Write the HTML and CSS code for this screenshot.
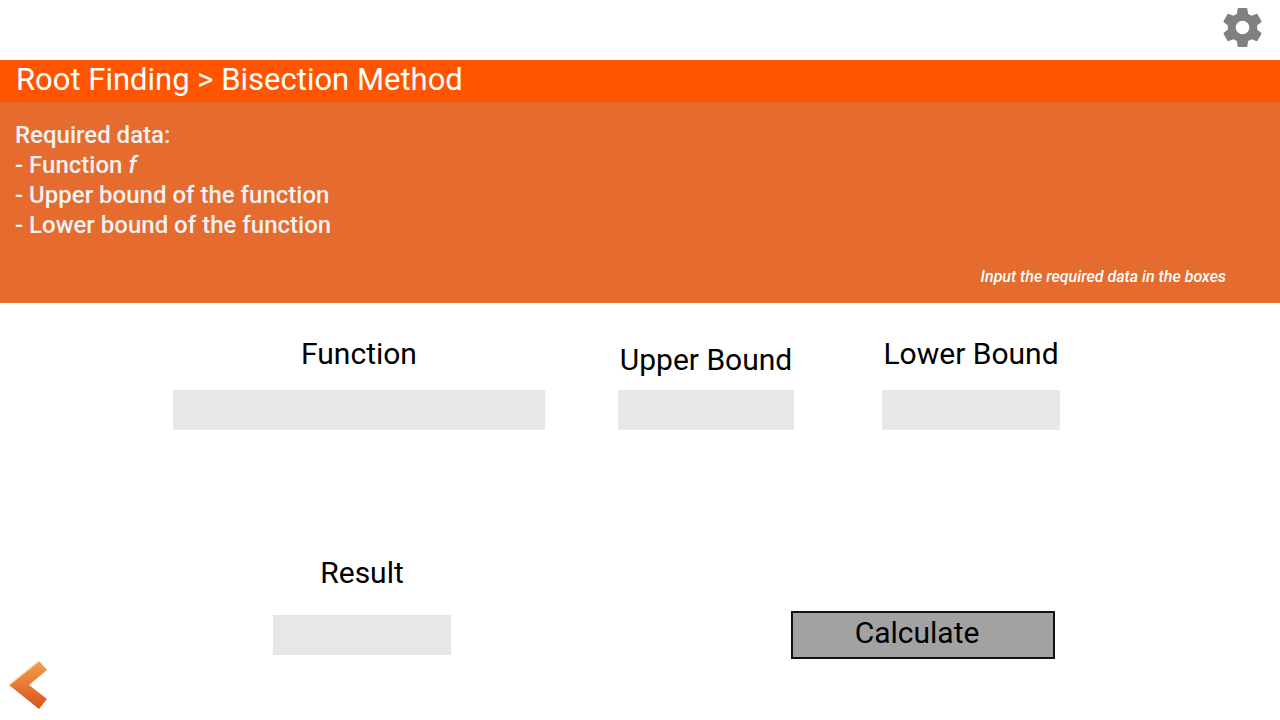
FILE: index.html
```html
<!DOCTYPE html>
<html lang="en">
<head>
<meta charset="utf-8">
<meta name="viewport" content="width=device-width, initial-scale=1">
<title>Root Finding &gt; Bisection Method</title>
<link rel="stylesheet" href="styles.css">
</head>
<body>
<header class="toolbar">
  <button class="icon-button" type="button" aria-label="Settings">
    <svg class="gear" viewBox="0 0 24 24" aria-hidden="true"><path d="M19.43 12.98c.04-.32.07-.64.07-.98s-.03-.66-.07-.98l2.11-1.65c.19-.15.24-.42.12-.64l-2-3.46c-.12-.22-.39-.3-.61-.22l-2.49 1c-.52-.4-1.08-.73-1.69-.98l-.38-2.65C14.46 2.18 14.25 2 14 2h-4c-.25 0-.46.18-.49.42l-.38 2.65c-.61.25-1.17.59-1.69.98l-2.49-1c-.23-.09-.49 0-.61.22l-2 3.46c-.13.22-.07.49.12.64l2.11 1.65c-.04.32-.07.65-.07.98s.03.66.07.98l-2.11 1.65c-.19.15-.24.42-.12.64l2 3.46c.12.22.39.3.61.22l2.49-1c.52.4 1.08.73 1.69.98l.38 2.65c.03.24.24.42.49.42h4c.25 0 .46-.18.49-.42l.38-2.65c.61-.25 1.17-.59 1.69-.98l2.49 1c.23.09.49 0 .61-.22l2-3.46c.12-.22.07-.49-.12-.64l-2.11-1.65zM12 15.5a3.5 3.5 0 1 1 0-7 3.5 3.5 0 0 1 0 7z"/></svg>
  </button>
</header>
<h1 class="title">Root Finding &gt; Bisection Method</h1>
<section class="info">
  <p class="info-heading">Required data:</p>
  <ul class="info-list">
    <li>- Function <em>f</em></li>
    <li>- Upper bound of the function</li>
    <li>- Lower bound of the function</li>
  </ul>
  <p class="note">Input the required data in the boxes</p>
</section>
<form class="form">
  <div class="inputs">
    <div class="field field-function">
      <label for="function">Function</label>
      <input id="function" type="text">
    </div>
    <div class="field field-upper">
      <label for="upper">Upper Bound</label>
      <input id="upper" type="text">
    </div>
    <div class="field field-lower">
      <label for="lower">Lower Bound</label>
      <input id="lower" type="text">
    </div>
  </div>
  <div class="outcome">
    <div class="field field-result">
      <label for="result">Result</label>
      <input id="result" type="text" readonly>
    </div>
    <button class="calculate" type="button">Calculate</button>
  </div>
</form>
<footer class="footer">
  <a class="back" href="#" aria-label="Back">
    <svg class="chevron" viewBox="0 0 40 50" aria-hidden="true">
      <defs>
        <linearGradient id="flame" x1="0" y1="0" x2="0" y2="1">
          <stop offset="0" stop-color="#f2a04c"/>
          <stop offset=".5" stop-color="#e97836"/>
          <stop offset="1" stop-color="#d4541c"/>
        </linearGradient>
      </defs>
      <path fill="url(#flame)" d="M31 1 39 10 21 25 39 39 31 49 1 25z"/>
      <path fill="none" stroke="#f8dfa5" stroke-width="1.4" d="M1 25 31 1"/>
    </svg>
  </a>
</footer>
</body>
</html>
```
FILE: styles.css
```css
* { box-sizing: border-box; }

body {
  margin: 0;
  min-height: 100vh;
  display: flex;
  flex-direction: column;
  background: #fff;
  color: #000;
  font-family: Roboto, "Liberation Sans", sans-serif;
}

.toolbar {
  display: flex;
  justify-content: flex-end;
  padding: 4px 14px 9px;
}

.icon-button {
  padding: 0;
  border: 0;
  background: none;
  cursor: pointer;
}

.gear {
  display: block;
  width: 47px;
  height: 47px;
  fill: #808080;
}

.title {
  margin: 0;
  padding: 1px 16px 3px;
  background: #ff5500;
  color: #fff;
  font-size: 31px;
  font-weight: 400;
  line-height: 38px;
}

.info {
  padding: 18px 54px 14px 15px;
  background: #e56b2e;
  color: #f2f2f2;
  font-size: 24px;
  font-weight: 500;
  line-height: 30px;
}

.info-heading { margin: 0; }

.info-list {
  margin: 0;
  padding: 0;
  list-style: none;
}

.note {
  margin: 25px 0 0;
  color: #fff;
  font-size: 16px;
  font-style: italic;
  line-height: 24px;
  text-align: right;
}

.form {
  display: flex;
  flex-direction: column;
  gap: 124px;
  padding-top: 32px;
}

.inputs,
.outcome {
  display: grid;
  align-items: end;
}

.inputs { grid-template-columns: 173fr 372fr 73fr 176fr 88fr 178fr 220fr; }
.outcome { grid-template-columns: 273fr 178fr 340fr 264fr 225fr; }

.field {
  display: flex;
  flex-direction: column;
  min-width: 0;
  gap: 17px;
  text-align: center;
}

.field-function { grid-column: 2; }
.field-upper { grid-column: 4; gap: 11px; }
.field-lower { grid-column: 6; }
.field-result { grid-column: 2; gap: 23px; padding-bottom: 4px; }

.field label,
.calculate {
  font-size: 30px;
  line-height: 38px;
  white-space: nowrap;
}

.field input {
  width: 100%;
  height: 40px;
  padding: 0 8px;
  border: 0;
  background: #e7e7e7;
  font: inherit;
  font-size: 24px;
}

.calculate {
  grid-column: 4;
  min-width: 0;
  padding: 1px 12px 5px 0;
  border: 2px solid #111;
  background: #a2a2a2;
  color: #000;
  font-family: inherit;
  cursor: pointer;
}

.footer {
  margin-top: auto;
  padding: 0 8px 10px;
}

.back { display: inline-block; vertical-align: top; }

.chevron {
  display: block;
  width: 40px;
  height: 50px;
}
```
